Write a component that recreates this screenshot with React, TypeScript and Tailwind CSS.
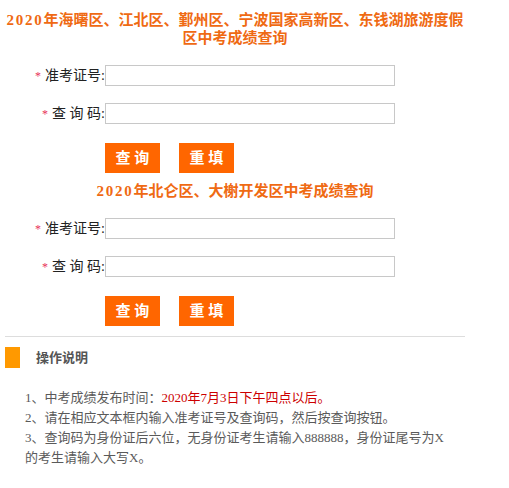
const fields = [
  { label: "准考证号:", name: "zkzh" },
  { label: "查 询 码:", name: "cxm" },
];

const QueryForm = ({ title }: { title: React.ReactNode }) => {
  return (
    <section>
      <h2 className="text-center text-[15px] font-bold leading-[18px] text-[#ef6a13]">{title}</h2>
      <form className="mt-[18px] flex flex-col gap-[17px]" onSubmit={(e) => e.preventDefault()}>
        {fields.map((f) => (
          <div key={f.name} className="flex h-[21px] items-center">
            <label className="flex w-[105px] items-center justify-end text-[14px] text-[#222]">
              <span className="mr-[4px] text-[12px] text-[#e8335a]">*</span>
              <span className="whitespace-pre">{f.label}</span>
            </label>
            <input
              name={f.name}
              type="text"
              className="h-[21px] w-[290px] border border-[#c8c8c8] bg-white outline-none"
            />
          </div>
        ))}
        <div className="ml-[105px] mt-[2px] flex gap-[19px]">
          <button type="submit" className="h-[30px] w-[55px] bg-[#ff6600] text-[15px] font-bold text-white whitespace-pre">
            查 询
          </button>
          <button type="reset" className="h-[30px] w-[55px] bg-[#ff6600] text-[15px] font-bold text-white whitespace-pre">
            重 填
          </button>
        </div>
      </form>
    </section>
  );
};

export default function App() {
  return (
    <div className="h-[488px] w-[509px] bg-white font-['Liberation_Serif','Noto_Sans_CJK_SC',serif]">
      <div className="w-[470px] pt-[11px]">
        <QueryForm
          title={
            <>
              <span className="tracking-[1.75px]">2020</span>年海曙区、江北区、鄞州区、宁波国家高新区、东钱湖旅游度假
              <br />
              区中考成绩查询
            </>
          }
        />
        <div className="mt-[9px]">
          <QueryForm
            title={
              <>
                <span className="tracking-[1.75px]">2020</span>年北仑区、大榭开发区中考成绩查询
              </>
            }
          />
        </div>
        <div className="ml-[5px] mt-[10px] h-px w-[460px] bg-[#dddddd]" />
        <div className="mt-[10px] flex items-center">
          <span className="ml-[5px] h-[21px] w-[15px] bg-[#ff9900]" />
          <h3 className="ml-[16px] text-[13px] font-bold text-[#555]">操作说明</h3>
        </div>
        <ol className="mt-[20px] w-[455px] pl-[25px] text-[13px] leading-[20px] text-[#5a5a5a]">
          <li>
            1、中考成绩发布时间：<span className="text-[#cc0000]">2020年7月3日下午四点以后。</span>
          </li>
          <li>2、请在相应文本框内输入准考证号及查询码，然后按查询按钮。</li>
          <li>3、查询码为身份证后六位，无身份证考生请输入888888，身份证尾号为X的考生请输入大写X。</li>
        </ol>
      </div>
    </div>
  );
}
